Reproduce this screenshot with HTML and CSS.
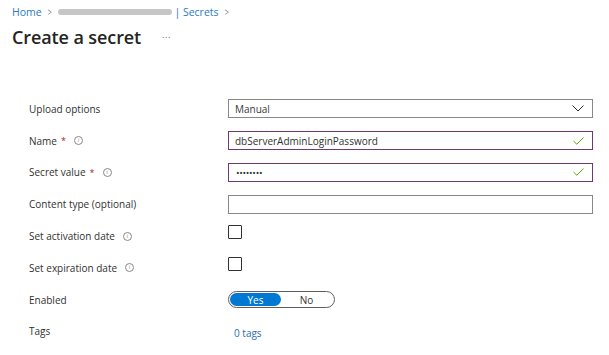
FILE: index.html
```html
<!DOCTYPE html>
<html lang="en">
<head>
<meta charset="utf-8">
<title>Create a secret</title>
<link rel="stylesheet" href="styles.css">
</head>
<body>
<header class="head">
  <nav class="crumbs">
    <a class="crumb">Home</a>
    <span class="chev">&gt;</span>
    <span class="blur"></span>
    <a class="crumb">| Secrets</a>
    <span class="chev">&gt;</span>
  </nav>
  <div class="title-row">
    <h1 class="title">Create a secret</h1>
    <span class="more">...</span>
  </div>
</header>
<main class="form">
  <div class="row">
    <label class="lbl">Upload options</label>
    <div class="field select">
      <span>Manual</span>
      <svg class="ico" width="12" height="7" viewBox="0 0 12 7"><path d="M0.5 0.5 L6 6 L11.5 0.5" fill="none" stroke="#323130" stroke-width="1"/></svg>
    </div>
  </div>
  <div class="row">
    <label class="lbl">Name <span class="req">*</span> <span class="info">i</span></label>
    <div class="field valid">
      <span>dbServerAdminLoginPassword</span>
      <svg class="ico" width="11" height="8" viewBox="0 0 11 8"><path d="M0.5 4 L3.8 7.2 L10.5 0.6" fill="none" stroke="#57a300" stroke-width="1"/></svg>
    </div>
  </div>
  <div class="row">
    <label class="lbl">Secret value <span class="req">*</span> <span class="info">i</span></label>
    <div class="field valid">
      <span class="dots">••••••••</span>
      <svg class="ico" width="11" height="8" viewBox="0 0 11 8"><path d="M0.5 4 L3.8 7.2 L10.5 0.6" fill="none" stroke="#57a300" stroke-width="1"/></svg>
    </div>
  </div>
  <div class="row">
    <label class="lbl">Content type (optional)</label>
    <div class="field"></div>
  </div>
  <div class="row">
    <label class="lbl">Set activation date <span class="info">i</span></label>
    <span class="check"></span>
  </div>
  <div class="row">
    <label class="lbl">Set expiration date <span class="info">i</span></label>
    <span class="check"></span>
  </div>
  <div class="row">
    <label class="lbl">Enabled</label>
    <div class="toggle">
      <span class="opt on">Yes</span>
      <span class="opt">No</span>
    </div>
  </div>
  <div class="row">
    <label class="lbl">Tags</label>
    <a class="tags">0 tags</a>
  </div>
</main>
</body>
</html>
```
FILE: styles.css
```css
* { box-sizing: border-box; }
html, body { margin: 0; background: #fff; }
body {
  font-family: "Open Sans", "Noto Sans", sans-serif;
  color: #323130;
  font-size: 10px;
}
.head { padding: 4px 0 0 12px; }
.crumbs {
  display: flex;
  align-items: center;
  height: 16px;
  font-size: 10.5px;
}
.crumb { color: #2a7ac2; }
.chev { color: #7a7a7a; margin: 0 5px; font-size: 10px; transform: scaleX(0.7); }
.blur {
  width: 114px;
  height: 6px;
  border-radius: 3px;
  background: #c6c6c6;
  margin: 0 2px 0 1px;
}
.title-row {
  display: flex;
  align-items: center;
  height: 28px;
  margin-top: 3px;
}
.title {
  margin: 0;
  font-size: 18px;
  font-weight: 600;
  color: #252423;
  letter-spacing: -0.1px;
}
.more {
  margin-left: 21px;
  margin-bottom: 6px;
  font-size: 9px;
  color: #666;
  letter-spacing: 0.6px;
}
.form { padding: 42px 16px 0 29px; }
.row {
  display: flex;
  align-items: center;
  height: 31.8px;
}
.lbl {
  width: 199px;
  flex: none;
  display: flex;
  align-items: center;
  white-space: nowrap;
}
.req { color: #a4262c; margin-left: 4px; font-size: 9px; }
.info {
  width: 9px;
  height: 9px;
  border: 1px solid #8a8886;
  border-radius: 50%;
  font-size: 6px;
  line-height: 7px;
  text-align: center;
  color: #8a8886;
  margin-left: 8px;
}
.field {
  width: 365px;
  height: 19px;
  border: 1px solid #8a8886;
  display: flex;
  align-items: center;
  justify-content: space-between;
  padding: 0 8px 0 6px;
  color: #323130;
}
.select span { color: #3b3a39; }
.valid { border-color: #6e3874; }
.dots { font-size: 9.5px; letter-spacing: -0.3px; padding-left: 1px; }
.check {
  width: 14px;
  height: 14px;
  border: 1px solid #323130;
  border-radius: 1px;
  margin-bottom: 8px;
}
.toggle {
  width: 107px;
  height: 17px;
  border: 1px solid #605e5c;
  border-radius: 9px;
  display: flex;
  align-items: center;
  padding: 1px;
}
.opt {
  width: 51px;
  height: 13px;
  display: flex;
  align-items: center;
  justify-content: center;
  color: #323130;
}
.opt.on {
  background: #0078d4;
  color: #fff;
  border-radius: 7px;
}
.tags {
  color: #2a6eb0;
  margin-left: 6px;
  margin-top: 4px;
}
```
